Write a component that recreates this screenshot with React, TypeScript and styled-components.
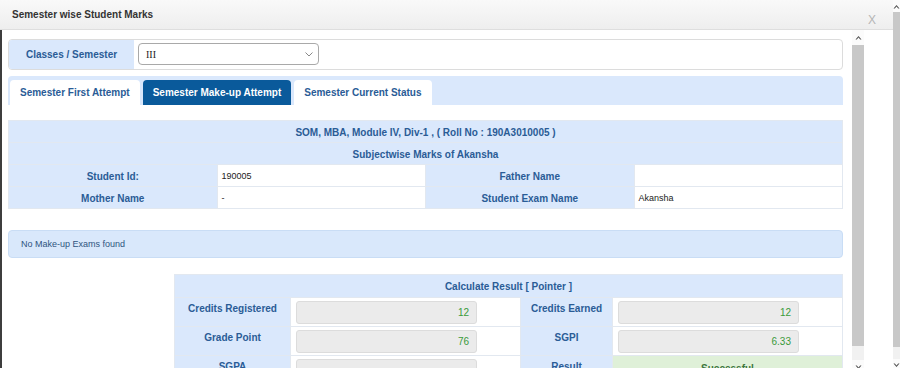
import styled, {createGlobalStyle} from "styled-components";

const LABEL_BLUE = "#2a5c96";
const CELL_BLUE = "#dae8fc";
const LINE = "#e2e8f0";

const GlobalStyle = createGlobalStyle`
  html, body {
    margin: 0;
    padding: 0;
    background: #fff;
    overflow: hidden;
  }
  body {
    font-family: "Liberation Sans", Arial, sans-serif;
  }
`;

const Screen = styled.div`
  display: flex;
  width: 900px;
  height: 368px;
  overflow: hidden;
`;

const Dialog = styled.div`
  width: 893px;
  display: flex;
  flex-direction: column;
`;

const Header = styled.div`
  height: 30px;
  flex-shrink: 0;
  box-sizing: border-box;
  border-bottom: 1px solid #dedede;
  background: linear-gradient(#f9f9f9, #eeeeee);
  display: flex;
  justify-content: space-between;
  align-items: center;
  padding: 0 17px 0 12px;
`;

const Title = styled.span`
  font-size: 10px;
  font-weight: bold;
  color: #333;
`;

const Close = styled.span`
  align-self: flex-end;
  padding-bottom: 2px;
  font-size: 12px;
  color: #b5b5b5;
`;

const Body = styled.div`
  flex: 1;
  min-height: 0;
  display: flex;
  overflow: hidden;
  border-left: 2px solid #3d3d3d;
`;

const Content = styled.div`
  width: 835px;
  flex-shrink: 0;
  padding: 9px 0 0 6px;
  display: flex;
  flex-direction: column;

  & > * {
    flex-shrink: 0;
  }
`;

const ScrollBar = styled.div<{$width: number; $gap: number}>`
  width: ${p => p.$width}px;
  margin-left: ${p => p.$gap}px;
  flex-shrink: 0;
  display: flex;
  flex-direction: column;
  background: #f1f1f1;
  overflow: hidden;
`;

const ScrollButton = styled.div<{$height: number}>`
  height: ${p => p.$height}px;
  flex-shrink: 0;
  background: #fbfbfb;
  display: flex;
  justify-content: center;
  align-items: center;
`;

const Thumb = styled.div<{$height: number}>`
  height: ${p => p.$height}px;
  flex-shrink: 0;
  background: #c8c8c8;
`;

const Track = styled.div<{$height: number}>`
  height: ${p => p.$height}px;
  flex-shrink: 0;
`;

const SelectPanel = styled.div`
  display: flex;
  height: 31px;
  box-sizing: border-box;
  border: 1px solid #dcdcdc;
  border-radius: 4px;
`;

const SelectLabel = styled.div`
  width: 125px;
  background: ${CELL_BLUE};
  border-radius: 3px 0 0 3px;
  display: flex;
  align-items: center;
  justify-content: center;
  font-size: 10px;
  font-weight: bold;
  color: ${LABEL_BLUE};
`;

const SelectCell = styled.div`
  flex: 1;
  padding: 3px 4px 0;
`;

const SelectBox = styled.div`
  width: 181px;
  height: 22px;
  box-sizing: border-box;
  border: 1px solid #a9a9a9;
  border-radius: 4px;
  display: flex;
  align-items: center;
  justify-content: space-between;
  padding: 0 5px 0 7px;
  font-family: "Liberation Serif", serif;
  font-size: 10px;
  color: #222;
`;

const TabBar = styled.div`
  margin-top: 6px;
  display: flex;
  gap: 3px;
  padding: 4px 2px 0;
  background: ${CELL_BLUE};
  border-radius: 4px 4px 0 0;
`;

const Tab = styled.div<{$active?: boolean}>`
  height: 25px;
  line-height: 26px;
  padding: 0 10px;
  border-radius: 4px 4px 0 0;
  font-size: 10px;
  font-weight: bold;
  background: ${p => (p.$active ? "#0a5a9b" : "#fff")};
  color: ${p => (p.$active ? "#fff" : LABEL_BLUE)};
`;

const InfoTable = styled.table`
  margin-top: 15px;
  width: 100%;
  table-layout: fixed;
  border-collapse: collapse;
  border: 1px solid #d9dfe7;

  td {
    height: 20px;
    border: 1px solid ${LINE};
    padding: 1px 4px 0;
  }
`;

const HeadCell = styled.td`
  background: ${CELL_BLUE};
  text-align: center;
  font-size: 10px;
  font-weight: bold;
  color: ${LABEL_BLUE};
`;

const LabelCell = styled.td`
  background: ${CELL_BLUE};
  text-align: center;
  font-size: 10px;
  font-weight: bold;
  color: ${LABEL_BLUE};
`;

const ValueCell = styled.td`
  background: #fff;
  font-size: 9px;
  color: #222;
`;

const Alert = styled.div`
  margin-top: 21px;
  height: 28px;
  box-sizing: border-box;
  border: 1px solid #c9ddf5;
  border-radius: 4px;
  background: #d9e8fb;
  padding: 0 12px;
  display: flex;
  align-items: center;
  font-size: 9px;
  color: #2f5580;
`;

const CalcTable = styled.table`
  margin: 16px 0 0 auto;
  width: 668px;
  table-layout: fixed;
  border-collapse: collapse;
  border: 1px solid #d9dfe7;

  td {
    border: 1px solid ${LINE};
  }
`;

const CalcHead = styled.td`
  height: 20px;
  background: ${CELL_BLUE};
  text-align: center;
  font-size: 10px;
  font-weight: bold;
  color: ${LABEL_BLUE};
`;

const CalcLabel = styled.td`
  height: 23px;
  background: ${CELL_BLUE};
  text-align: center;
  vertical-align: top;
  padding: 5px 2px 0;
  line-height: 12px;
  font-size: 10px;
  font-weight: bold;
  color: ${LABEL_BLUE};
`;

const CalcValue = styled.td<{$success?: boolean}>`
  vertical-align: top;
  padding: 3px 5px 0;
  background: ${p => (p.$success ? "#dff0d8" : "#fff")};
  text-align: ${p => (p.$success ? "center" : "left")};
  font-size: 10px;
  font-weight: ${p => (p.$success ? "bold" : "normal")};
  color: #3c763d;
`;

const ReadOnly = styled.div`
  width: 181px;
  height: 23px;
  box-sizing: border-box;
  background: #ebebeb;
  border: 1px solid #dcdcdc;
  border-radius: 3px;
  padding: 0 7px;
  text-align: right;
  line-height: 21px;
  font-size: 10px;
  color: #3a9a3a;
`;

const SuccessText = styled.div`
  padding-top: 4px;
  line-height: 12px;
`;

function Arrow({up}: {up?: boolean}) {
	return (
		<svg width="7" height="5" viewBox="0 0 7 5">
			<path d={up ? "M0.5 4.5 L3.5 1 L6.5 4.5 L5.2 4.5 L3.5 2.6 L1.8 4.5 Z" : "M0.5 0.5 L3.5 4 L6.5 0.5 L5.2 0.5 L3.5 2.4 L1.8 0.5 Z"} fill="#505050" />
		</svg>
	);
}

const info = [
	["Student Id:", "190005", "Father Name", ""],
	["Mother Name", "-", "Student Exam Name", "Akansha"],
];

const results = [
	["Credits Registered", "12", "Credits Earned", "12"],
	["Grade Point", "76", "SGPI", "6.33"],
];

export default function App() {
	return (
		<Screen>
			<GlobalStyle />
			<Dialog>
				<Header>
					<Title>Semester wise Student Marks</Title>
					<Close>X</Close>
				</Header>
				<Body>
					<Content>
						<SelectPanel>
							<SelectLabel>Classes / Semester</SelectLabel>
							<SelectCell>
								<SelectBox>
									<span>III</span>
									<svg width="8" height="5" viewBox="0 0 8 5">
										<polyline points="0.5,0.5 4,4 7.5,0.5" fill="none" stroke="#888" strokeWidth="1" />
									</svg>
								</SelectBox>
							</SelectCell>
						</SelectPanel>

						<TabBar>
							<Tab>Semester First Attempt</Tab>
							<Tab $active>Semester Make-up Attempt</Tab>
							<Tab>Semester Current Status</Tab>
						</TabBar>

						<InfoTable>
							<tbody>
								<tr>
									<HeadCell colSpan={4}>SOM, MBA, Module IV, Div-1 , ( Roll No : 190A3010005 )</HeadCell>
								</tr>
								<tr>
									<HeadCell colSpan={4}>Subjectwise Marks of Akansha</HeadCell>
								</tr>
								{info.map(row => (
									<tr key={row[0]}>
										<LabelCell>{row[0]}</LabelCell>
										<ValueCell>{row[1]}</ValueCell>
										<LabelCell>{row[2]}</LabelCell>
										<ValueCell>{row[3]}</ValueCell>
									</tr>
								))}
							</tbody>
						</InfoTable>

						<Alert>No Make-up Exams found</Alert>

						<CalcTable>
							<colgroup>
								<col style={{width: 116}} />
								<col style={{width: 230}} />
								<col style={{width: 92}} />
								<col style={{width: 230}} />
							</colgroup>
							<tbody>
								<tr>
									<CalcHead colSpan={4}>Calculate Result [ Pointer ]</CalcHead>
								</tr>
								{results.map(row => (
									<tr key={row[0]}>
										<CalcLabel>{row[0]}</CalcLabel>
										<CalcValue><ReadOnly>{row[1]}</ReadOnly></CalcValue>
										<CalcLabel>{row[2]}</CalcLabel>
										<CalcValue><ReadOnly>{row[3]}</ReadOnly></CalcValue>
									</tr>
								))}
								<tr>
									<CalcLabel>SGPA</CalcLabel>
									<CalcValue><ReadOnly /></CalcValue>
									<CalcLabel>Result</CalcLabel>
									<CalcValue $success><SuccessText>Successful</SuccessText></CalcValue>
								</tr>
							</tbody>
						</CalcTable>
					</Content>

					<ScrollBar $width={12} $gap={9}>
						<ScrollButton $height={15}><Arrow up /></ScrollButton>
						<Thumb $height={301} />
						<Track $height={14} />
						<ScrollButton $height={14}><Arrow /></ScrollButton>
					</ScrollBar>
				</Body>
			</Dialog>

			<ScrollBar $width={7} $gap={0}>
				<ScrollButton $height={12}><Arrow up /></ScrollButton>
				<Thumb $height={335} />
				<Track $height={12} />
				<ScrollButton $height={12}><Arrow /></ScrollButton>
			</ScrollBar>
		</Screen>
	);
}
